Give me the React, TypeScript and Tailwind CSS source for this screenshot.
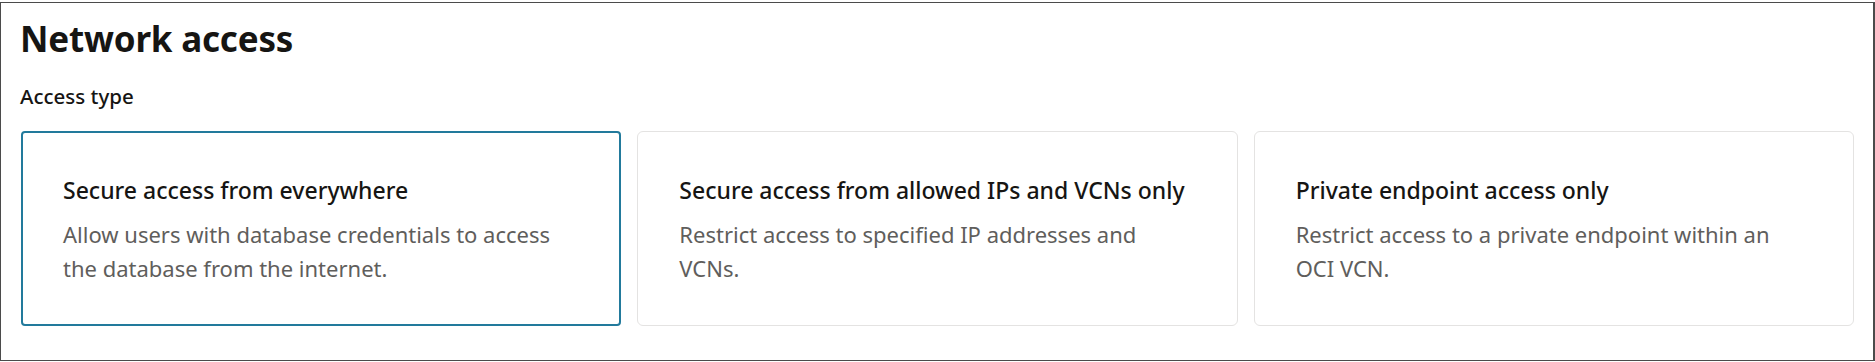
const options = [
  {
    title: "Secure access from everywhere",
    description: "Allow users with database credentials to access the database from the internet.",
    selected: true,
  },
  {
    title: "Secure access from allowed IPs and VCNs only",
    description: "Restrict access to specified IP addresses and VCNs.",
    selected: false,
  },
  {
    title: "Private endpoint access only",
    description: "Restrict access to a private endpoint within an OCI VCN.",
    selected: false,
  },
];

const App = () => {
  return (
    <div className="w-[1875px] h-[362px] pt-[2px] bg-white font-['Noto_Sans',sans-serif]">
      <div className="h-[359px] border border-[#4b4b4b] border-r-2 pl-[19px] pr-4 pt-[14px]">
        <h1 className="text-[35px] leading-[44px] font-bold text-[#161513] tracking-[-0.2px]">Network access</h1>
        <div className="mt-[22px] text-[20.5px] leading-[26px] font-medium text-[#161513]">Access type</div>

        {/* Access type cards */}
        <div className="mt-[22px] pl-[1px] pr-[3px] grid grid-cols-3 gap-4">
          {options.map((option) => (
            <div
              key={option.title}
              className={
                option.selected
                  ? "h-[195px] rounded-[4px] border-2 border-[#227a9c] pl-10 pr-8 pt-[42px] cursor-pointer"
                  : "h-[195px] rounded-[6px] border border-[#e4e3e2] pl-[41px] pr-[33px] pt-[43px] cursor-pointer"
              }
            >
              <h3 className="text-[23px] leading-[30px] font-medium text-[#161513]">{option.title}</h3>
              <p className="mt-[12px] max-w-[495px] text-[22px] leading-[34px] text-[#5f5e5c]">{option.description}</p>
            </div>
          ))}
        </div>
      </div>
    </div>
  );
};

export default App;
